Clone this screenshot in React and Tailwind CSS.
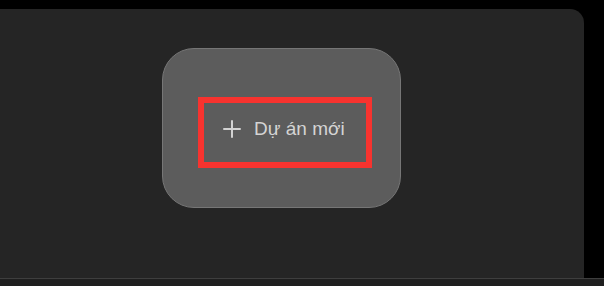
const PlusIcon = () => (
    <svg width="18" height="18" viewBox="0 0 18 18" className="shrink-0">
        <path
            d="M9 1v16M1 9h16"
            stroke="#d2d2d2"
            strokeWidth="2"
            strokeLinecap="round"
            fill="none"
        />
    </svg>
);

const NewProjectCard = () => {
    return (
        <div className="ml-[162px] mt-[39px] h-[160px] w-[239px] rounded-[32px] border border-[#767676] bg-[#5c5c5c]">
            <div className="ml-[35px] mt-[48px] flex h-[71px] w-[174px] items-center border-[6px] border-[#f7332f] pb-[8px] pl-[19px]">
                <PlusIcon />
                <span className="ml-[13px] text-[19px] leading-none text-[#d4d4d4]">
                    Dự án mới
                </span>
            </div>
        </div>
    );
};

export default function App() {
    return (
        <div
            className="flex h-[286px] w-[604px] flex-col overflow-hidden bg-black"
            style={{ fontFamily: '"Liberation Sans", Arial, sans-serif' }}
        >
            <div className="flex flex-1 pt-[9px]">
                <div className="w-[584px] rounded-tr-[14px] bg-[#252525]">
                    <NewProjectCard />
                </div>
            </div>
            <div className="h-[8px] border-t border-[#3e3e3e] bg-[#1f1f1f]" />
        </div>
    );
}
